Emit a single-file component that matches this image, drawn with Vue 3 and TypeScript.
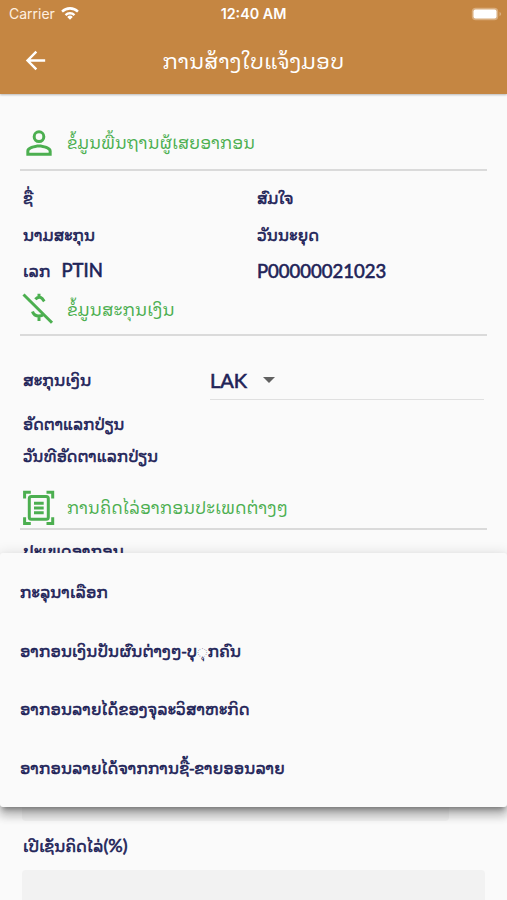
<script setup lang="ts">
interface Fact {
  label: string
  code?: string
  value: string
  latin?: boolean
}

interface Option {
  text: string
  mark?: string
  rest?: string
}

const person: Fact[] = [
  { label: 'ຊື່', value: 'ສົມໃຈ' },
  { label: 'ນາມສະກຸນ', value: 'ວັນນະຍຸດ' },
  { label: 'ເລກ', code: 'PTIN', value: 'P00000021023', latin: true },
]

const options: Option[] = [
  { text: 'ກະລຸນາເລືອກ' },
  { text: 'ອາກອນເງິນປັນຜົນຕ່າງໆ-ບຸ', mark: '◌ຸ', rest: 'ກຄົນ' },
  { text: 'ອາກອນລາຍໄດ້ຂອງຈຸລະວິສາຫະກິດ' },
  { text: 'ອາກອນລາຍໄດ້ຈາກການຊື້-ຂາຍອອນລາຍ' },
]
</script>

<template>
  <div class="screen">
    <header class="top">
      <div class="status">
        <div class="carrier">
          <span>Carrier</span>
          <svg class="wifi" viewBox="0 0 18 13"><path d="M9 12.8 6.2 9.9a4 4 0 0 1 5.6 0zM3.7 7.3a7.5 7.5 0 0 1 10.6 0l-1.7 1.8a5.1 5.1 0 0 0-7.2 0zM.2 3.7a12.4 12.4 0 0 1 17.6 0l-1.7 1.9a10 10 0 0 0-14.2 0z" /></svg>
        </div>
        <span class="clock">12:40 AM</span>
        <svg class="battery" viewBox="0 0 31 14"><rect x=".8" y=".8" width="26.4" height="12.4" rx="4" class="shell" /><rect x="2.5" y="2.5" width="23" height="9" rx="2" /><path d="M28.5 5v4q1.7-.5 1.7-2T28.5 5" class="shell" /></svg>
      </div>
      <div class="bar">
        <svg class="back" viewBox="0 0 24 24"><path d="M20 11H7.83l5.59-5.59L12 4l-8 8 8 8 1.41-1.41L7.83 13H20z" /></svg>
        <h1>ການສ້າງໃບແຈ້ງມອບ</h1>
      </div>
    </header>

    <main>
      <section class="head head-person">
        <svg viewBox="0 0 24 24"><path d="M12 5.9a2.1 2.1 0 1 1 0 4.2 2.1 2.1 0 0 1 0-4.2m0 9c2.97 0 6.1 1.46 6.1 2.1v1.1H5.9V17c0-.64 3.13-2.1 6.1-2.1M12 4a4 4 0 1 0 0 8 4 4 0 0 0 0-8m0 9c-2.67 0-8 1.34-8 4v3h16v-3c0-2.66-5.33-4-8-4" /></svg>
        <h2>ຂໍ້ມູນພື້ນຖານຜູ້ເສຍອາກອນ</h2>
      </section>
      <dl class="facts">
        <div v-for="f in person" :key="f.label" class="fact">
          <dt>{{ f.label }}<span v-if="f.code" class="latin code">{{ f.code }}</span></dt>
          <dd :class="{ latin: f.latin }">{{ f.value }}</dd>
        </div>
      </dl>

      <section class="head head-money">
        <svg viewBox="0 0 38 38" class="line"><path d="M3.5 4.5 32 32.7M19 3.7v3.5M15.3 9.2Q19 5.5 22 8.3l2.3 3M12.5 21.5Q13.8 26 19 26q3.500 0 5-2.800M19 26v5" /></svg>
        <h2>ຂໍ້ມູນສະກຸນເງິນ</h2>
      </section>
      <div class="currency">
        <span class="label">ສະກຸນເງິນ</span>
        <div class="select"><span class="latin">LAK</span><i class="caret"></i></div>
      </div>
      <p class="label rate">ອັດຕາແລກປ່ຽນ</p>
      <p class="label date">ວັນທີອັດຕາແລກປ່ຽນ</p>

      <section class="head head-tax">
        <svg viewBox="0 0 38 38" class="line"><path d="M4.6 10.5V4.3h6.2M26.5 4.3h6.2v6.2M32.7 29.2v6.2h-6.2M10.8 35.4H4.6v-6.2M14 15.3h9.7M14 20h9.7M14 24.7h9.7" /><rect x="9.3" y="8.5" width="19" height="22.8" rx="2" /></svg>
        <h2>ການຄິດໄລ່ອາກອນປະເພດຕ່າງໆ</h2>
      </section>
      <p class="label type">ປະເພດອາກອນ</p>
      <div class="input first"></div>
      <p class="label percent">ເປີເຊັນຄິດໄລ່<span class="unit">(%)</span></p>
      <div class="input"></div>
    </main>

    <ul class="menu">
      <li v-for="o in options" :key="o.text">{{ o.text }}<span v-if="o.mark" class="mark">{{ o.mark }}</span>{{ o.rest }}</li>
    </ul>
  </div>
</template>

<style>
body { margin: 0; }
</style>

<style scoped>
.screen { position: relative; height: 900px; overflow: hidden; background: #fafafa; color: #1e2358; font-family: "Noto Sans Lao Looped", "Noto Sans Lao", Lato, "DejaVu Sans", sans-serif; font-size: 16px; }
.top { height: 94px; background: #c58642; color: #fff; box-shadow: 0 1px 2px #0004; }
.status { height: 28px; display: grid; grid-template-columns: 1fr auto 1fr; align-items: center; font: 14.3px/26px Inter, sans-serif; }
.carrier { display: flex; align-items: center; gap: 6px; padding-left: 9px; font-size: 14px; color: #fff0e0; }
.wifi { width: 18px; height: 13px; fill: #fff; margin-top: -1px; }
.clock { font-weight: 600; }
.battery { width: 31px; height: 14px; justify-self: end; margin: -1px 5px 0 0; fill: #fff; }
.shell { fill: #d9ad7d; }
.bar { height: 64px; display: grid; grid-template-columns: 72px 1fr 72px; align-items: center; }
.back { width: 29px; height: 29px; fill: #fff; margin-left: 21px; }
h1 { margin: 0; padding-bottom: 2px; text-align: center; font-size: 21.4px; font-weight: 400; white-space: nowrap; line-height: 40px; }
h2 { margin: 0; padding-bottom: 2px; font-size: 16.9px; font-weight: 400; color: #4caf50; white-space: nowrap; line-height: 30px; }
main { padding: 0 20px; }
.head { display: flex; align-items: center; box-sizing: border-box; border-bottom: 2px solid #dadada; gap: 9px; }
.head svg { width: 38px; height: 38px; fill: #4caf50; flex: none; }
.head .line { fill: none; stroke: #4caf50; stroke-width: 3; }
.head-person { height: 54px; margin-top: 23px; }
.head-money { height: 46px; padding-bottom: 6px; }
.head-money h2 { font-size: 17.4px; padding-bottom: 3px; }
.head-tax { height: 44px; margin-top: 14px; }
.head-tax h2 { padding-bottom: 0; }
.facts { margin: 0; padding: 8px 3px 0; height: 119px; box-sizing: border-box; }
.fact { display: grid; grid-template-columns: 234px 1fr; height: 36.5px; line-height: 36px; -webkit-text-stroke: 0.6px currentColor; }
dt, dd { margin: 0; }
.latin { font-family: Lato, sans-serif; font-size: 18.5px; -webkit-text-stroke: 0.6px currentColor; }
dd.latin { padding-top: 1px; }
.unit { font-family: Lato, sans-serif; font-size: 18px; }
.code { margin-left: 11px; }
.label { margin: 0; -webkit-text-stroke: 0.6px currentColor; padding-left: 3px; white-space: nowrap; }
.currency { display: grid; grid-template-columns: 190px 274px; height: 64px; align-items: end; }
.currency .label { font-size: 16.4px; line-height: 38px; padding-bottom: 2px; }
.select { height: 38px; border-bottom: 1px solid #e0e0e0; display: flex; align-items: center; gap: 16px; }
.select .latin { font-size: 20px; line-height: 38px; }
.caret { border: 6px solid transparent; border-top-color: #616161; border-bottom: 0; }
.rate, .date { height: 32px; line-height: 30px; font-size: 15.6px; }
.rate { margin-top: 8px; }
.type, .percent { height: 30px; line-height: 27px; }
.type { margin-top: 7px; }
.percent { margin-top: 11px; }
.input { background: #f2f2f2; height: 60px; margin: 8px 2px 0; border-radius: 4px; }
.input.first { width: 427px; height: 246px; }
.menu { position: absolute; left: 0; right: 0; top: 553px; height: 254px; margin: 0; padding: 10px 20px; box-sizing: border-box; list-style: none; background: #fafafa; border-radius: 3px; box-shadow: 0 5px 5px -3px #0005, 0 8px 10px 1px #0003, 0 3px 14px 2px #0002; -webkit-text-stroke: 0.6px currentColor; }
.menu li { height: 58.5px; line-height: 57px; white-space: nowrap; }
.mark { -webkit-text-stroke: 0; }
</style>
